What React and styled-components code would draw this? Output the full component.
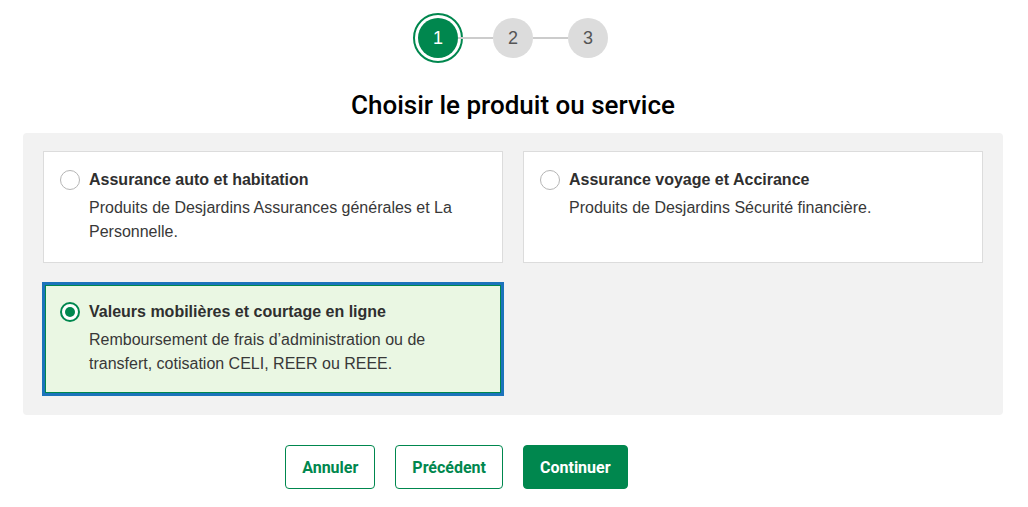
import React, { useState } from "react";
import styled, { createGlobalStyle, css } from "styled-components";

const GlobalStyle = createGlobalStyle`
  html, body { margin: 0; padding: 0; background: #fff; }
  body { font-family: "Liberation Sans", Arial, sans-serif; color: #383838; }
  * { box-sizing: border-box; }
`;

const Page = styled.div`
  padding: 18px 25px 0 23px;
  display: flex;
  flex-direction: column;
  align-items: center;
`;

const Stepper = styled.ol`
  list-style: none;
  margin: 0;
  padding: 0;
  display: flex;
  align-items: center;
`;

const StepLine = styled.li`
  width: 35px;
  height: 2px;
  background: #cccccc;
`;

const StepCircle = styled.li`
  width: 40px;
  height: 40px;
  border-radius: 50%;
  display: flex;
  align-items: center;
  justify-content: center;
  font-family: "Liberation Sans", Arial, sans-serif;
  font-size: 18px;
  background: #dcdcdc;
  color: #555;
  ${(p) =>
    p.$active &&
    css`
      background: #00874e;
      color: #fff;
      outline: 2px solid #00874e;
      outline-offset: 3px;
    `}
`;

const Title = styled.h1`
  margin: 30px 0 11px;
  font-family: Roboto, "Liberation Sans", sans-serif;
  font-weight: 500;
  font-size: 26px;
  line-height: 34px;
  color: #000;
  text-align: center;
`;

const Panel = styled.div`
  width: 980px;
  background: #f2f2f2;
  border-radius: 4px;
  padding: 18px 20px 20px;
  display: grid;
  grid-template-columns: 1fr 1fr;
  gap: 20px;
`;

const Card = styled.label`
  display: flex;
  align-items: flex-start;
  gap: 9px;
  min-height: 112px;
  padding: 16px 16px 18px;
  background: #fff;
  border: 1px solid #dcdcdc;
  cursor: pointer;
  ${(p) =>
    p.$selected &&
    css`
      background: #eaf7e3;
      border: 2px solid #1b73bb;
      padding: 15px 15px 17px;
      box-shadow: 0 0 0 1px #1b73bb, inset 0 0 0 1px #00874e;
    `}
`;

const Radio = styled.span`
  flex: none;
  width: 20px;
  height: 20px;
  margin-top: 2px;
  border-radius: 50%;
  border: 1px solid #b5b5b5;
  background: #fff;
  display: flex;
  align-items: center;
  justify-content: center;
  ${(p) =>
    p.$checked &&
    css`
      border: 2px solid #00874e;
      &::after {
        content: "";
        width: 10px;
        height: 10px;
        border-radius: 50%;
        background: #00874e;
      }
    `}
`;

const CardBody = styled.div`
  display: flex;
  flex-direction: column;
  gap: 4px;
`;

const CardTitle = styled.span`
  font-weight: 700;
  font-size: 16px;
  line-height: 24px;
  color: #2f2f2f;
`;

const CardText = styled.span`
  font-size: 16px;
  line-height: 24px;
  color: #383838;
`;

const Actions = styled.div`
  width: 980px;
  margin-top: 30px;
  padding: 0 20px;
  display: grid;
  grid-template-columns: 1fr 1fr;
  gap: 20px;
`;

const ActionGroup = styled.div`
  display: flex;
  gap: 20px;
  justify-content: ${(p) => (p.$end ? "flex-end" : "flex-start")};
`;

const Button = styled.button`
  height: 44px;
  padding: 0 16px;
  border-radius: 4px;
  font-family: Roboto, "Liberation Sans", sans-serif;
  font-weight: 700;
  font-size: 16px;
  cursor: pointer;
  border: 1px solid #00874e;
  background: ${(p) => (p.$primary ? "#00874e" : "#fff")};
  color: ${(p) => (p.$primary ? "#fff" : "#00874e")};
`;

const options = [
  {
    title: "Assurance auto et habitation",
    text: "Produits de Desjardins Assurances générales et La Personnelle.",
  },
  {
    title: "Assurance voyage et Accirance",
    text: "Produits de Desjardins Sécurité financière.",
  },
  {
    title: "Valeurs mobilières et courtage en ligne",
    text: "Remboursement de frais d’administration ou de transfert, cotisation CELI, REER ou REEE.",
  },
];

export default function App() {
  const [selected, setSelected] = useState(2);
  return (
    <>
      <GlobalStyle />
      <Page>
        <Stepper>
          <StepCircle $active>1</StepCircle>
          <StepLine />
          <StepCircle>2</StepCircle>
          <StepLine />
          <StepCircle>3</StepCircle>
        </Stepper>
        <Title>Choisir le produit ou service</Title>
        <Panel>
          {options.map((o, i) => (
            <Card key={i} $selected={selected === i} onClick={() => setSelected(i)}>
              <Radio $checked={selected === i} />
              <CardBody>
                <CardTitle>{o.title}</CardTitle>
                <CardText>{o.text}</CardText>
              </CardBody>
            </Card>
          ))}
        </Panel>
        <Actions>
          <ActionGroup $end>
            <Button>Annuler</Button>
            <Button>Précédent</Button>
          </ActionGroup>
          <ActionGroup>
            <Button $primary>Continuer</Button>
          </ActionGroup>
        </Actions>
      </Page>
    </>
  );
}
